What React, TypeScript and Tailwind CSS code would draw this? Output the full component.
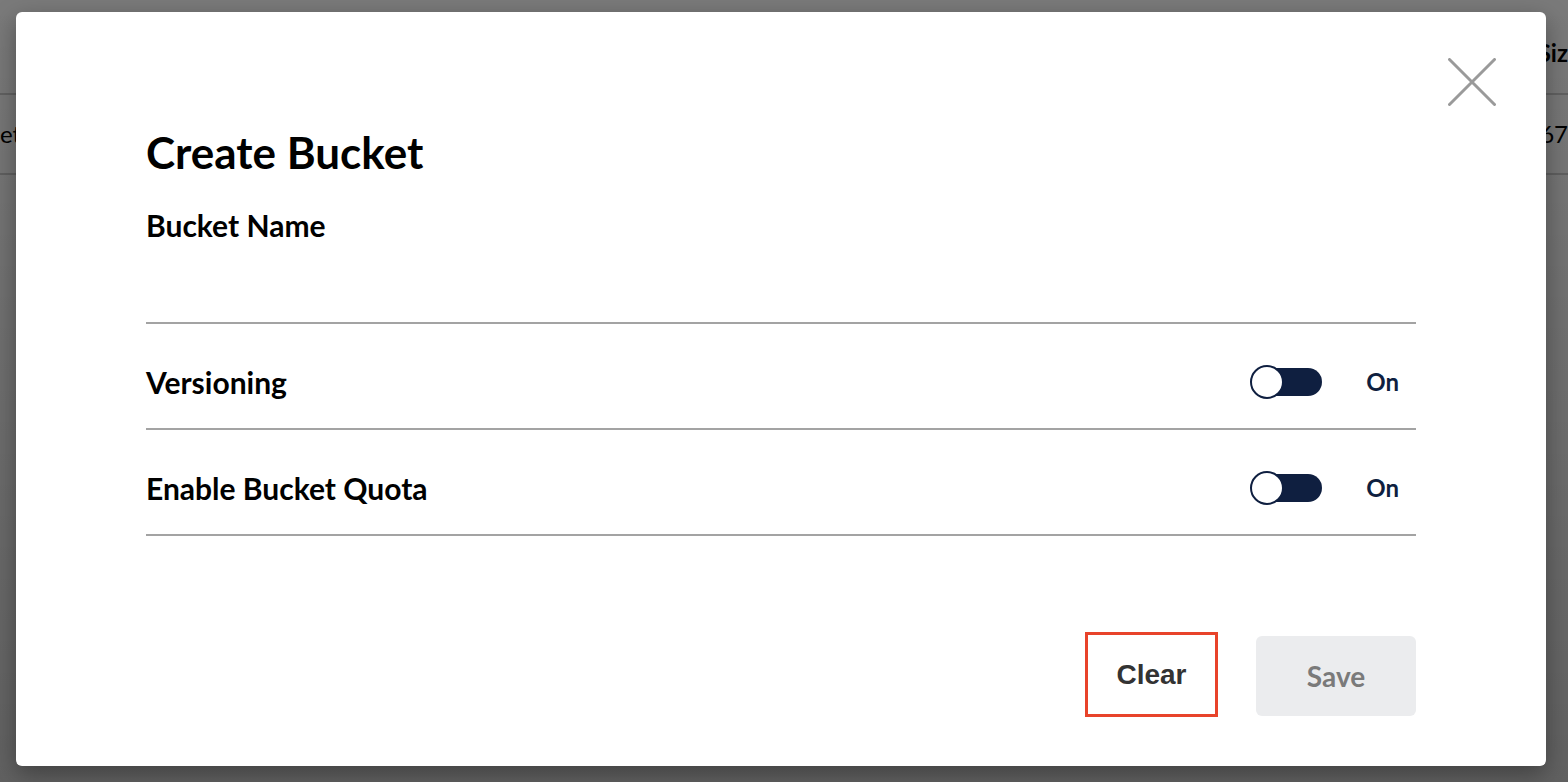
function Toggle() {
  return (
    <div className="relative h-[34px] w-[72px]">
      <div className="absolute left-[2px] right-0 top-[3px] h-[28px] rounded-full bg-[#0f1f40]" />
      <div className="absolute left-0 top-0 h-[34px] w-[34px] rounded-full border-2 border-[#0f1f40] bg-white" />
    </div>
  );
}

function SwitchRow({ label }: { label: string }) {
  return (
    <div className="flex h-[106px] items-center border-b-2 border-[#a3a3a3] pt-[12px]">
      <span className="flex-1 text-[30px] font-bold leading-none text-black">{label}</span>
      <Toggle />
      <span className="ml-[44px] mr-[17px] text-[24px] font-bold leading-none text-[#0f1f40]">On</span>
    </div>
  );
}

export default function App() {
  return (
    <div className="relative h-[782px] w-[1568px] overflow-hidden bg-white font-['Lato','Noto_Sans',sans-serif]">
      {/* page behind the dialog */}
      <div className="flex h-[95px] items-end justify-end border-b-2 border-[#d0d0d0] pb-[28px]">
        <span className="text-[24px] font-bold leading-none text-black">Siz</span>
      </div>
      <div className="flex h-[80px] items-center justify-between border-b-2 border-[#d0d0d0]">
        <span className="text-[24px] leading-none text-black">et</span>
        <span className="text-[24px] leading-none text-black">67</span>
      </div>

      {/* backdrop */}
      <div className="absolute inset-0 bg-[linear-gradient(180deg,rgba(0,0,0,0.52),rgba(0,0,0,0.62))]">
        <div className="ml-[16px] mt-[12px] flex h-[754px] w-[1530px] flex-col rounded-[6px] bg-white px-[130px] shadow-[0_8px_24px_rgba(0,0,0,0.35)]">
          <div className="relative">
            <button className="absolute -right-[80px] top-[46px]">
              <svg width="48" height="48" viewBox="0 0 48 48" fill="none" stroke="#9a9a9a" strokeWidth="3" strokeLinecap="round">
                <path d="M1.5 1.5 L46.5 46.5 M46.5 1.5 L1.5 46.5" />
              </svg>
            </button>
          </div>
          <h1 className="mt-[118px] text-[44px] font-bold leading-none text-black">Create Bucket</h1>
          <div className="mt-[36px] text-[30px] font-bold leading-none text-black">Bucket Name</div>
          <div className="mt-[82px] border-b-2 border-[#a3a3a3]" />
          <SwitchRow label="Versioning" />
          <SwitchRow label="Enable Bucket Quota" />
          <div className="mt-[96px] flex justify-end gap-[38px]">
            <button className="flex h-[85px] w-[133px] items-center justify-center border-[3px] border-[#e8432a] font-['Liberation_Sans',Arial,sans-serif] text-[28px] font-bold text-[#333333]">
              Clear
            </button>
            <button className="mt-[4px] flex h-[80px] w-[160px] items-center justify-center rounded-[6px] bg-[#ebecee] text-[28px] font-bold text-[#7a7a7a]">
              Save
            </button>
          </div>
        </div>
      </div>
    </div>
  );
}
